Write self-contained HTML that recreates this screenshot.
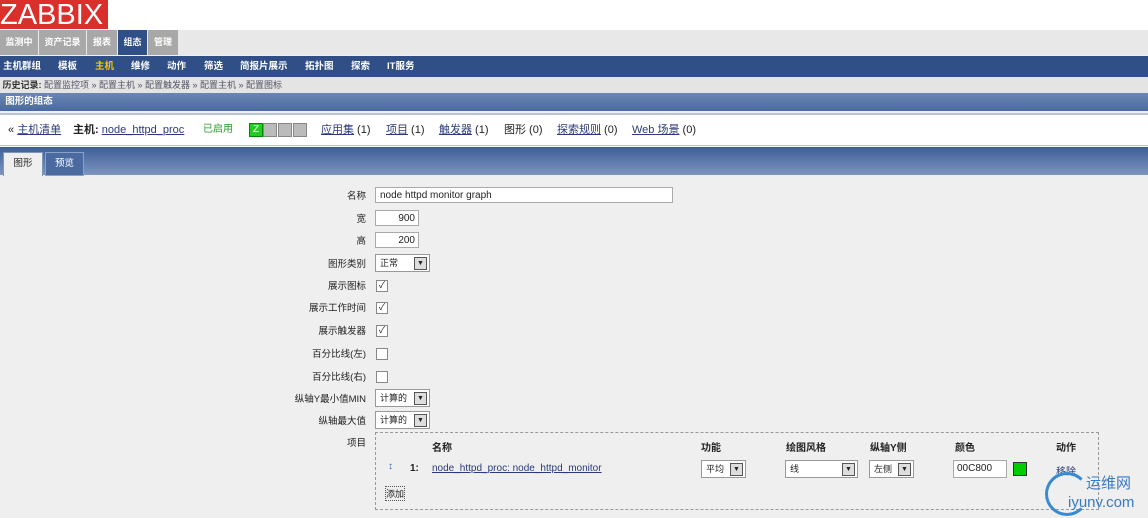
<!DOCTYPE html>
<html><head><meta charset="utf-8"><style>
body{margin:0;width:1148px;height:518px;background:#efefef;font-family:"Liberation Sans","Noto Sans CJK SC",sans-serif;font-size:10px;color:#222;position:relative;overflow:hidden}
.a{position:absolute}
.logo{left:0;top:0;width:108px;height:29px;background:#d9302c;color:#fff;font-size:29px;line-height:30px;letter-spacing:0px}
.top{left:0;top:0;width:1148px;height:30px;background:#fff}
.m1{top:30px;left:0;width:1148px;height:25px;background:#e8e8e8}
.tab1{top:30px;height:25px;line-height:24px;background:#a8a8a8;color:#fff;font-weight:bold;font-size:9px;text-align:center}
.m2{top:56px;left:0;width:1148px;height:21px;background:#2f4f86;color:#fff;font-weight:bold;font-size:9.5px;line-height:21px}
.m2 span{position:absolute}
.hist{top:77px;left:0;width:1148px;height:16px;background:#e4e4e4;line-height:16px;font-size:9px;color:#556}
.hdr{top:93px;left:0;width:1148px;height:18px;background:linear-gradient(#6a86b3,#4a6aa0);color:#fff;font-weight:bold;font-size:9.5px;line-height:18px}
.host{top:113px;left:0;width:1148px;height:30px;background:#fff;border-top:2px solid #b8c4d4;border-bottom:3px double #b8c4d4;font-size:11px;line-height:30px}
.host span{position:absolute}
u{color:#2a3a7a}
.tb{top:147px;left:0;width:1148px;height:28px;background:linear-gradient(#3d5f98,#7d95bf)}
.lbl{position:absolute;width:366px;text-align:right;font-size:9.5px;left:0;margin-top:-2px}
.inp{position:absolute;background:#fff;border:1px solid #aaa;height:16px;line-height:16px;font-size:10px;box-sizing:border-box}
.sel{position:absolute;background:#fff;border:1px solid #999;height:18px;line-height:16px;font-size:9px;box-sizing:border-box;padding-left:4px}
.sel i{position:absolute;right:2px;top:2px;width:11px;height:11px;border:1px solid #555;background:#ddd;font-style:normal;font-size:7px;line-height:11px;text-align:center}
.cb{position:absolute;left:376px;width:10px;height:10px;border:1px solid #888;background:#fff;font-size:9px;line-height:9px;text-align:center}
</style></head><body>
<div class="a top"></div>
<div class="a logo">ZABBIX</div>
<div class="a m1"></div>
<div class="a tab1" style="left:0;width:38px">监测中</div>
<div class="a tab1" style="left:39px;width:47px">资产记录</div>
<div class="a tab1" style="left:87px;width:30px">报表</div>
<div class="a tab1" style="left:118px;width:29px;background:#2f4f86">组态</div>
<div class="a tab1" style="left:148px;width:30px">管理</div>
<div class="a m2"><span style="left:3px">主机群组</span><span style="left:58px">模板</span><span style="left:95px;color:#f5c400">主机</span><span style="left:131px">维修</span><span style="left:167px">动作</span><span style="left:204px">筛选</span><span style="left:240px">简报片展示</span><span style="left:305px">拓扑图</span><span style="left:351px">探索</span><span style="left:387px">IT服务</span></div>
<div class="a hist">&nbsp;<b style="color:#333">历史记录:</b> 配置监控项 » 配置主机 » 配置触发器 » 配置主机 » 配置图标</div>
<div class="a hdr">&nbsp;&nbsp;图形的组态</div>
<div class="a host"><span style="left:8px">« <u>主机清单</u></span><span style="left:73px"><b>主机:</b> <u>node_httpd_proc</u></span><span style="left:203px;color:#2a9a2a;font-size:10px">已启用</span>
<span style="left:249px;top:8px;width:12px;height:12px;background:#2c2;border:1px solid #080;color:#fff;font-size:10px;line-height:12px;text-align:center">Z</span>
<span style="left:263px;top:8px;width:12px;height:12px;background:#bbb;border:1px solid #888"></span>
<span style="left:278px;top:8px;width:12px;height:12px;background:#bbb;border:1px solid #888"></span>
<span style="left:293px;top:8px;width:12px;height:12px;background:#bbb;border:1px solid #888"></span>
<span style="left:321px"><u>应用集</u> (1)</span><span style="left:386px"><u>项目</u> (1)</span><span style="left:439px"><u>触发器</u> (1)</span><span style="left:504px">图形 (0)</span><span style="left:557px"><u>探索规则</u> (0)</span><span style="left:632px"><u>Web 场景</u> (0)</span></div>
<div class="a tb"></div>
<div class="a" style="left:3px;top:152px;width:38px;height:23px;background:#efefef;border:1px solid #7d95bf;border-bottom:none;text-align:center;line-height:22px;font-size:9.5px">图形</div>
<div class="a" style="left:45px;top:152px;width:37px;height:22px;background:#4a6aa0;border:1px solid #8aa0c8;color:#fff;text-align:center;line-height:22px;font-size:9.5px">预览</div>

<div class="lbl" style="top:190px">名称</div><div class="inp" style="left:375px;top:187px;width:298px;padding-left:4px">node httpd monitor graph</div>
<div class="lbl" style="top:213px">宽</div><div class="inp" style="left:375px;top:210px;width:44px;text-align:right;padding-right:3px">900</div>
<div class="lbl" style="top:235px">高</div><div class="inp" style="left:375px;top:232px;width:44px;text-align:right;padding-right:3px">200</div>
<div class="lbl" style="top:258px">图形类别</div><div class="sel" style="left:375px;top:254px;width:55px">正常<i>▼</i></div>
<div class="lbl" style="top:280px">展示图标</div><div class="cb" style="top:280px">✓</div>
<div class="lbl" style="top:302px">展示工作时间</div><div class="cb" style="top:302px">✓</div>
<div class="lbl" style="top:325px">展示触发器</div><div class="cb" style="top:325px">✓</div>
<div class="lbl" style="top:348px">百分比线(左)</div><div class="cb" style="top:348px"></div>
<div class="lbl" style="top:371px">百分比线(右)</div><div class="cb" style="top:371px"></div>
<div class="lbl" style="top:393px">纵轴Y最小值MIN</div><div class="sel" style="left:375px;top:389px;width:55px">计算的<i>▼</i></div>
<div class="lbl" style="top:415px">纵轴最大值</div><div class="sel" style="left:375px;top:411px;width:55px">计算的<i>▼</i></div>
<div class="lbl" style="top:437px">项目</div>
<div class="a" style="left:375px;top:432px;width:722px;height:76px;border:1px dashed #999"></div>
<div class="a" style="top:439px;left:432px;font-weight:bold;font-size:10px">名称</div>
<div class="a" style="top:439px;left:701px;font-weight:bold;font-size:10px">功能</div>
<div class="a" style="top:439px;left:786px;font-weight:bold;font-size:10px">绘图风格</div>
<div class="a" style="top:439px;left:870px;font-weight:bold;font-size:10px">纵轴Y侧</div>
<div class="a" style="top:439px;left:955px;font-weight:bold;font-size:10px">颜色</div>
<div class="a" style="top:439px;left:1056px;font-weight:bold;font-size:10px">动作</div>
<div class="a" style="top:461px;left:388px;color:#36a;font-weight:bold">↕</div>
<div class="a" style="top:463px;left:410px;font-weight:bold">1:</div>
<div class="a" style="top:463px;left:432px;font-size:10px"><u>node_httpd_proc: node_httpd_monitor</u></div>
<div class="sel" style="left:701px;top:460px;width:45px">平均<i>▼</i></div>
<div class="sel" style="left:785px;top:460px;width:73px">线<i>▼</i></div>
<div class="sel" style="left:869px;top:460px;width:45px">左侧<i>▼</i></div>
<div class="inp" style="left:953px;top:460px;width:54px;height:18px;line-height:16px;padding-left:3px">00C800</div>
<div class="a" style="left:1013px;top:462px;width:12px;height:12px;background:#0c0;border:1px solid #333"></div>
<div class="a" style="top:463px;left:1056px;color:#2a3a7a">移除</div>
<div class="a" style="top:486px;left:385px;border:1px dotted #555;font-size:9px">添加</div>
<div class="a" style="left:1045px;top:472px;width:38px;height:38px;border-radius:50%;border:3px solid #3a8ad0;border-right-color:transparent"></div>
<div class="a" style="left:1086px;top:472px;font-size:15px;color:#3a7abf">运维网</div>
<div class="a" style="left:1068px;top:494px;font-size:15px;color:#3a7abf">iyunv.com</div>
</body></html>
